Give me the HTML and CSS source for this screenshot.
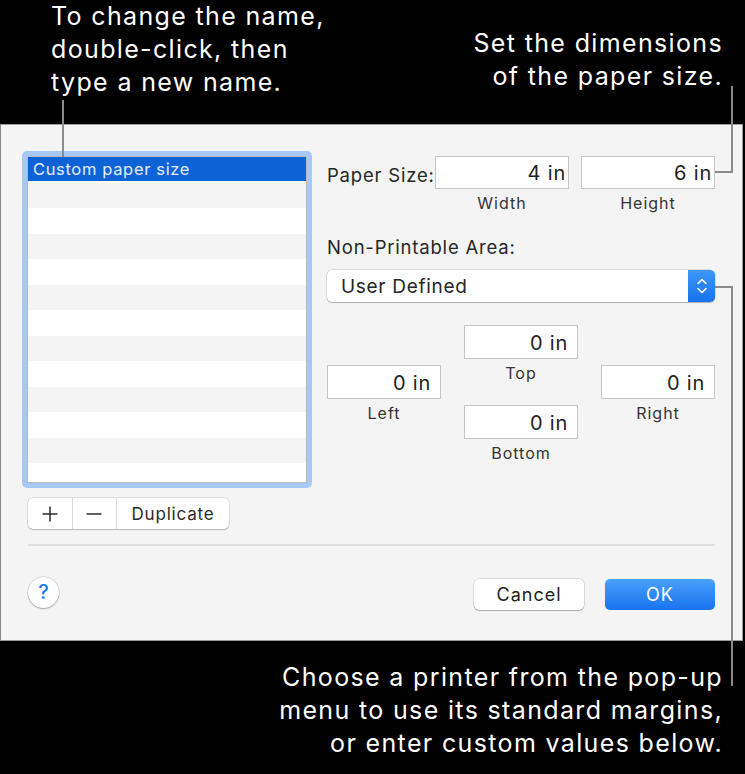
FILE: index.html
```html
<!DOCTYPE html>
<html lang="en">
<head>
<meta charset="utf-8">
<title>Custom paper size</title>
<link rel="stylesheet" href="styles.css">
</head>
<body>
<div class="canvas">
  <header class="top-notes">
    <p class="note note-left">To change the name,<br>double-click, then<br>type a new name.</p>
    <p class="note note-right">Set the dimensions<br>of the paper size.</p>
  </header>

  <section class="dialog">
    <div class="dialog-main">
      <div class="left-col">
        <div class="list-ring">
          <ul class="list">
            <li class="row selected">Custom paper size</li>
            <li class="row alt"></li>
            <li class="row"></li>
            <li class="row alt"></li>
            <li class="row"></li>
            <li class="row alt"></li>
            <li class="row"></li>
            <li class="row alt"></li>
            <li class="row"></li>
            <li class="row alt"></li>
            <li class="row"></li>
            <li class="row alt"></li>
            <li class="row"></li>
          </ul>
        </div>
        <div class="seg">
          <button class="seg-btn seg-icon" aria-label="Add">
            <svg width="18" height="18" viewBox="0 0 18 18"><path d="M9 1.5v15M1.5 9h15" stroke="#2b2b2b" stroke-width="1.5" fill="none"/></svg>
          </button>
          <button class="seg-btn seg-icon" aria-label="Remove">
            <svg width="18" height="18" viewBox="0 0 18 18"><path d="M1.5 9h15" stroke="#2b2b2b" stroke-width="1.5" fill="none"/></svg>
          </button>
          <button class="seg-btn seg-text">Duplicate</button>
        </div>
      </div>

      <div class="right-col">
        <div class="size-row">
          <span class="label size-label">Paper Size:</span>
          <div class="field-group">
            <div class="field size-field">4 in</div>
            <span class="cap">Width</span>
          </div>
          <div class="field-group">
            <div class="field size-field">6 in</div>
            <span class="cap">Height</span>
          </div>
        </div>

        <div class="label npa-label">Non-Printable Area:</div>

        <div class="popup">
          <span class="popup-text">User Defined</span>
          <span class="popup-arrows">
            <svg width="12" height="20" viewBox="0 0 12 20"><path d="M2 7.5l4-4 4 4M2 12.5l4 4 4-4" stroke="#fff" stroke-width="1.6" fill="none" stroke-linecap="round" stroke-linejoin="round"/></svg>
          </span>
        </div>

        <div class="margins">
          <div class="m-col m-side">
            <div class="field m-field">0 in</div>
            <span class="cap">Left</span>
          </div>
          <div class="m-col m-center">
            <div class="m-group">
              <div class="field m-field">0 in</div>
              <span class="cap">Top</span>
            </div>
            <div class="m-group">
              <div class="field m-field">0 in</div>
              <span class="cap">Bottom</span>
            </div>
          </div>
          <div class="m-col m-side">
            <div class="field m-field">0 in</div>
            <span class="cap">Right</span>
          </div>
        </div>
      </div>
    </div>

    <div class="sep"></div>

    <div class="footer">
      <button class="help" aria-label="Help">?</button>
      <div class="actions">
        <button class="btn btn-cancel">Cancel</button>
        <button class="btn btn-ok">OK</button>
      </div>
    </div>
  </section>

  <footer class="bottom-note">
    <p class="note note-bottom">Choose a printer from the pop-up<br>menu to use its standard margins,<br>or enter custom values below.</p>
  </footer>

  <span class="callout c1"></span>
  <span class="callout c2v"></span>
  <span class="callout c2h"></span>
  <span class="callout c3h"></span>
  <span class="callout c3v"></span>
</div>
</body>
</html>
```

FILE: styles.css
```css
* { box-sizing: border-box; }

html, body {
  margin: 0;
  padding: 0;
  background: #000;
}

body {
  font-family: "Inter", "Noto Sans", sans-serif;
  letter-spacing: 0.7px;
}

.canvas {
  position: relative;
  width: 745px;
  height: 774px;
  overflow: hidden;
  background: #000;
}

/* callout notes */
.note {
  margin: 0;
  color: #fff;
  font-size: 25px;
  line-height: 33px;
  font-weight: 400;
  letter-spacing: 1.35px;
  white-space: nowrap;
}

.top-notes {
  height: 124px;
  display: flex;
  justify-content: space-between;
  align-items: flex-start;
}

.note-left {
  margin-left: 51px;
  margin-top: 0;
}

.note-right {
  text-align: right;
  margin-right: 22px;
  margin-top: 27px;
}

.bottom-note {
  display: flex;
  justify-content: flex-end;
  padding-top: 20px;
  padding-right: 22px;
}

.note-bottom {
  text-align: right;
}

/* dialog */
.dialog {
  width: 743px;
  height: 517px;
  background: #f4f4f4;
  border: 1px solid #9c9c9c;
  border-left-color: #8a8a8a;
  padding: 26px 27px 0 21px;
}

.dialog-main {
  display: flex;
  gap: 15px;
  height: 379px;
}

.left-col {
  width: 290px;
  display: flex;
  flex-direction: column;
}

.list-ring {
  width: 290px;
  height: 337px;
  padding: 5px;
  border-radius: 5px;
  background: #a5c9f4;
}

.list {
  list-style: none;
  margin: 0;
  padding: 0;
  height: 100%;
  overflow: hidden;
  background: #fff;
  border: 1px solid #b9b9b9;
}

.row {
  height: 25.5px;
  background: #fff;
}

.row.alt {
  background: #f4f4f4;
}

.row.selected {
  height: 24px;
  margin-bottom: 1.5px;
  background: #0d63d6;
  color: #e2ecff;
  font-size: 16.5px;
  line-height: 25px;
  padding-left: 5px;
  letter-spacing: 0.65px;
}

.seg {
  display: flex;
  margin: 10px 0 0 6px;
  width: 201px;
  height: 31px;
  background: #fff;
  border-radius: 5px;
  box-shadow: 0 0 0 0.5px rgba(0,0,0,0.18), 0 1px 1px rgba(0,0,0,0.18);
  overflow: hidden;
}

.seg-btn {
  border: 0;
  background: transparent;
  padding: 0;
  margin: 0;
  font-family: inherit;
  letter-spacing: 0.8px;
  display: flex;
  align-items: center;
  justify-content: center;
  height: 100%;
  color: #2b2b2b;
}

.seg-icon {
  width: 44.5px;
  border-right: 1px solid #d9d9d9;
}

.seg-text {
  flex: 1;
  font-size: 17px;
}

/* right column */
.right-col {
  width: 388px;
  padding-top: 5px;
}

.label {
  font-size: 18.5px;
  color: #262626;
  letter-spacing: 0.8px;
}

.size-row {
  display: flex;
  align-items: flex-start;
}

.size-label {
  width: 109px;
  height: 33px;
  line-height: 39px;
  white-space: nowrap;
}

.field-group {
  display: flex;
  flex-direction: column;
  align-items: center;
}

.field-group + .field-group {
  margin-left: 12px;
}

.field {
  background: #fff;
  border: 1px solid #c5c5c5;
  text-align: right;
  color: #222;
  font-size: 20px;
  letter-spacing: 0.8px;
}

.size-field {
  width: 134px;
  height: 33px;
  line-height: 32px;
  padding-right: 2px;
}

.cap {
  display: block;
  margin-top: 4px;
  height: 20px;
  line-height: 20px;
  font-size: 16px;
  color: #333;
  letter-spacing: 1px;
}

.npa-label {
  margin-top: 22px;
  height: 22px;
  line-height: 24px;
}

.popup {
  margin-top: 13px;
  height: 32px;
  display: flex;
  align-items: stretch;
  background: #fff;
  border-radius: 5px;
  box-shadow: 0 0 0 0.5px rgba(0,0,0,0.2), 0 1px 1px rgba(0,0,0,0.2);
  overflow: hidden;
}

.popup-text {
  flex: 1;
  padding-left: 14px;
  font-size: 19px;
  line-height: 34px;
  color: #262626;
  letter-spacing: 0.7px;
}

.popup-arrows {
  width: 27px;
  display: flex;
  align-items: center;
  justify-content: center;
  background: linear-gradient(#3d97f8, #1672ef);
}

.margins {
  margin-top: 23px;
  display: flex;
  gap: 23px;
}

.m-col {
  width: 114px;
  display: flex;
  flex-direction: column;
  align-items: center;
}

.m-side {
  margin-top: 40px;
}

.m-group {
  display: flex;
  flex-direction: column;
  align-items: center;
}

.m-group + .m-group {
  margin-top: 22px;
}

.m-field {
  width: 114px;
  height: 34px;
  line-height: 35px;
  padding-right: 9px;
}

.sep {
  margin: 14px 0 0 6px;
  height: 2px;
  background: #e0e0e0;
}

.footer {
  display: flex;
  justify-content: space-between;
  align-items: flex-start;
  padding: 31px 0 0 6px;
}

.help {
  width: 31px;
  height: 31px;
  border-radius: 50%;
  border: 0;
  padding: 0;
  background: #fff;
  box-shadow: 0 0 0 0.5px rgba(0,0,0,0.2), 0 1px 1.5px rgba(0,0,0,0.25);
  color: #1a7cf0;
  font-family: inherit;
  font-size: 20px;
  font-weight: 500;
  line-height: 31px;
  text-align: center;
}

.actions {
  display: flex;
  gap: 21px;
  margin-top: 2px;
}

.btn {
  width: 110px;
  height: 31px;
  border: 0;
  border-radius: 5px;
  padding: 0;
  font-family: inherit;
  font-size: 18px;
  letter-spacing: 1px;
  line-height: 31px;
}

.btn-cancel {
  background: #fff;
  color: #222;
  box-shadow: 0 0 0 0.5px rgba(0,0,0,0.2), 0 1px 1px rgba(0,0,0,0.2);
}

.btn-ok {
  background: linear-gradient(#4aa0fa, #1873f1);
  color: #fff;
}

/* callout leader lines (overlay) */
.callout {
  position: absolute;
  background: #8a8a8a;
}

.c1 { left: 62px; top: 100px; width: 2px; height: 57px; }
.c2v { left: 731px; top: 86px; width: 2px; height: 87px; }
.c2h { left: 715px; top: 171px; width: 18px; height: 2px; }
.c3h { left: 715px; top: 286px; width: 18px; height: 2px; }
.c3v { left: 731px; top: 286px; width: 2px; height: 400px; }
```
